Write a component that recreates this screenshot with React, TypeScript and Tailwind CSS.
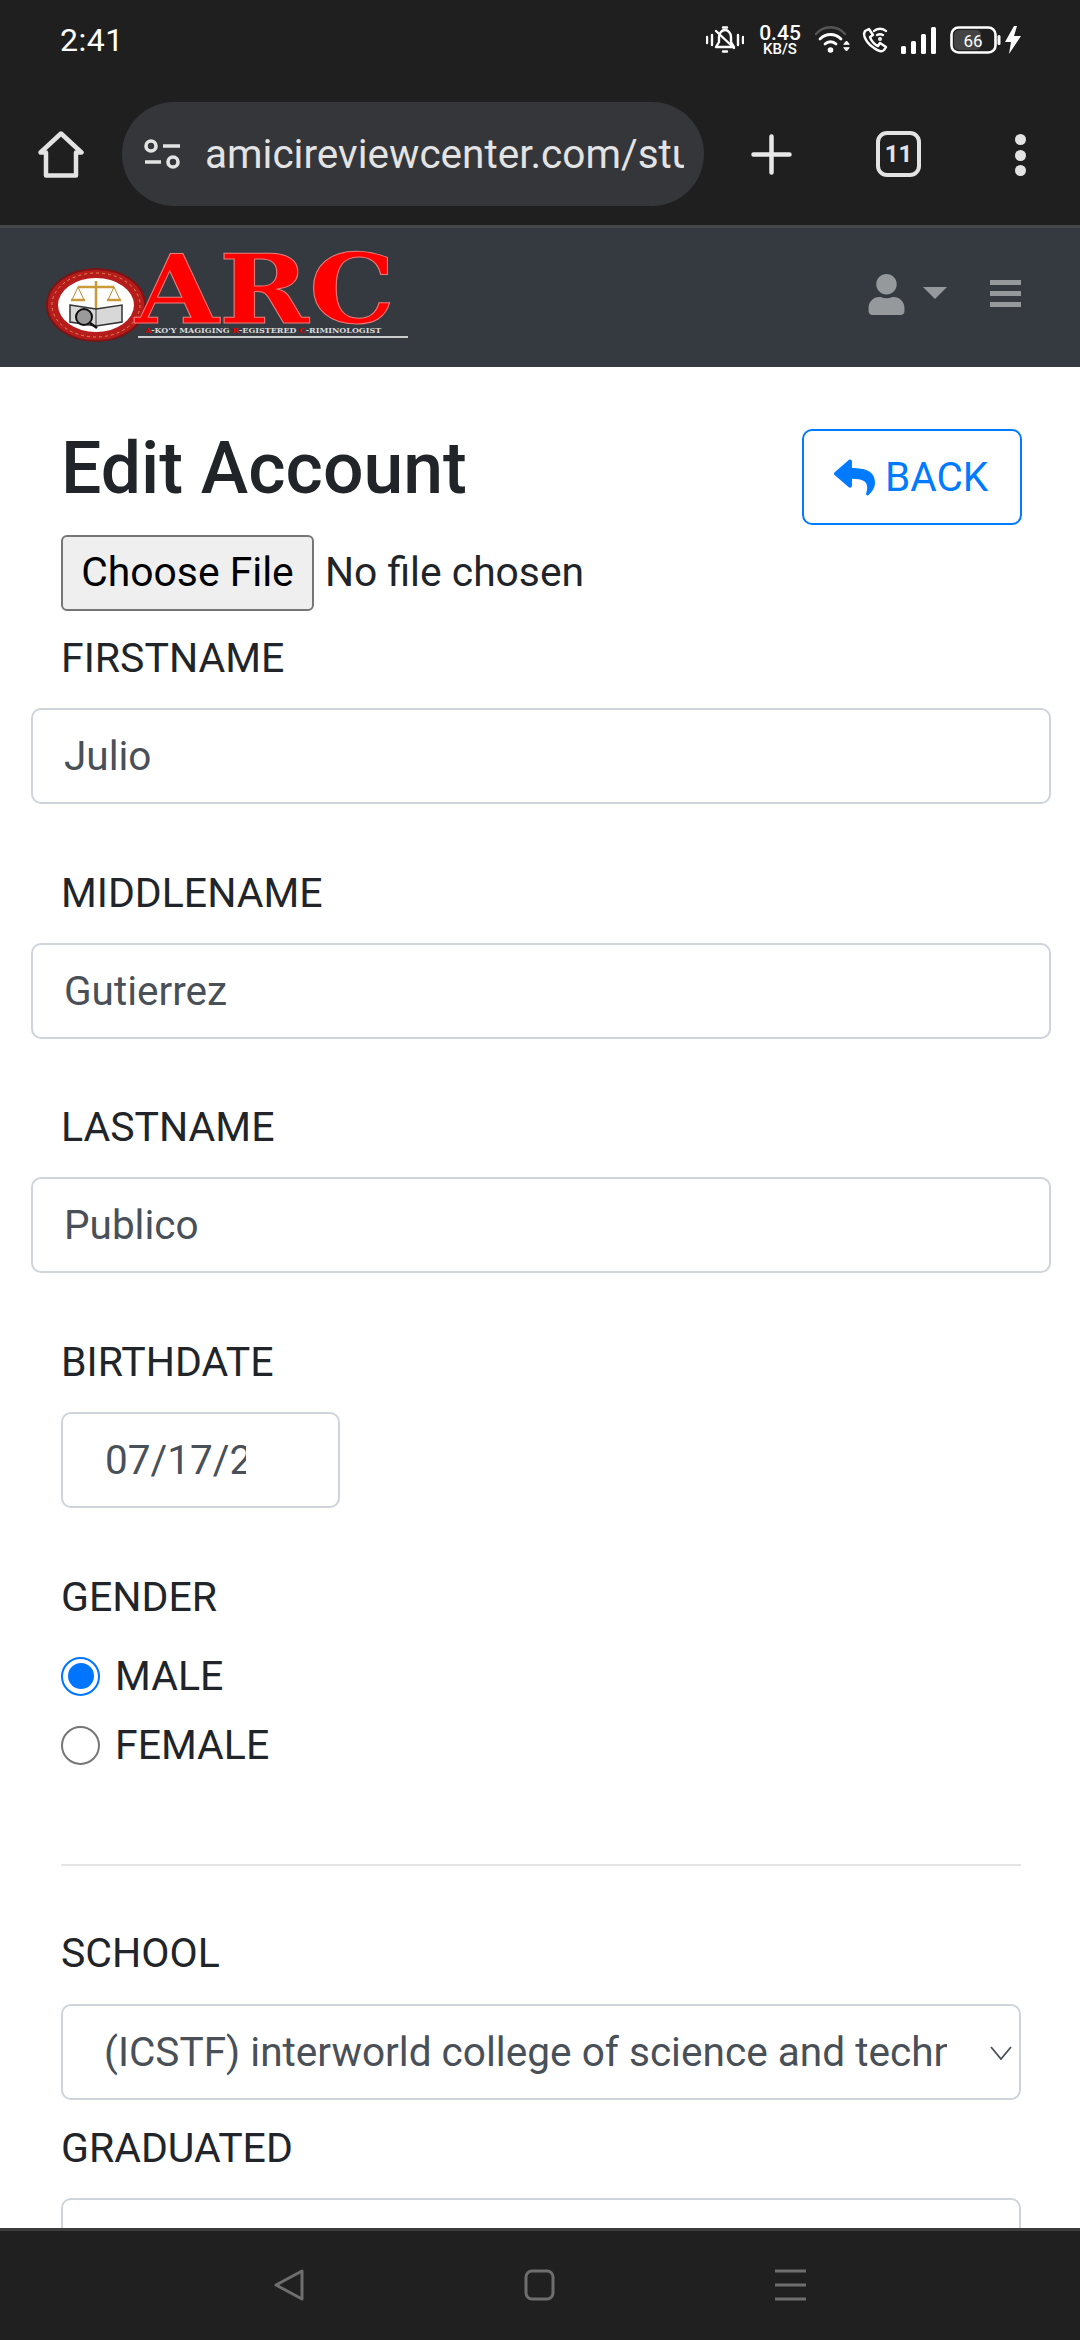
import React from 'react';
import { FaReply, FaUser } from 'react-icons/fa';

function StatusBar() {
  return (
    <div className="flex h-[80px] items-center justify-between pl-[60px] pr-[59px] text-white">
      <span className="text-[32px] leading-none tracking-[0.5px]">2:41</span>
      <div className="flex items-center">
        <svg width="38" height="28" viewBox="0 0 38 28" fill="none" stroke="white" strokeWidth="2.4" strokeLinecap="round" strokeLinejoin="round">
          <path d="M1 11v6M6 9v10M32 9v10M37 11v6" />
          <path d="M10 21h18l-3-5v-5c0-4-3-7-6-7s-6 3-6 7v5z" />
          <path d="M17 1.5h4M10 5l18 17M17 25.500h4" />
        </svg>
        <div className="ml-[15px] flex w-[42px] flex-col items-center font-medium leading-none">
          <span className="text-[21px] leading-[18px]">0.45</span>
          <span className="mt-[1px] text-[15px] leading-[13px]">KB/S</span>
        </div>
        <svg className="ml-[14px]" width="35" height="28" viewBox="0 0 35 28" fill="none" strokeLinecap="round">
          <path d="M1 8C9-1 22-1 30 8" stroke="#555" strokeWidth="2.400" />
          <path d="M5 13c6-6 15-6 21 0M10 18c3-3 8-3 11 0" stroke="white" strokeWidth="2.800" />
          <circle cx="15.500" cy="24" r="2.800" fill="white" />
          <path d="M29 18l2.500-3 2.500 3zM29 22l2.500 3 2.500-3z" fill="white" stroke="white" strokeWidth="1" />
        </svg>
        <svg className="ml-[12px]" width="26" height="28" viewBox="0 0 26 28" fill="none" stroke="white" strokeWidth="2.400" strokeLinecap="round" strokeLinejoin="round">
          <path d="M3 5l4-2 4 6-3 2c1 4 5 8 8 9l2-3 6 4-2 3c-2 2-6 1-10-2C7 19 2 13 2 8z" />
          <path d="M12 5c3-3 9-3 12 0M15 9c2-1 4-1 6 0" />
          <circle cx="18" cy="13" r="0.800" />
        </svg>
        <svg className="ml-[13px]" width="35" height="27" viewBox="0 0 35 27" fill="white">
          <rect x="0" y="19" width="5" height="8" rx="1.500" />
          <rect x="10" y="14" width="5" height="13" rx="1.500" />
          <rect x="20" y="7" width="5" height="20" rx="1.500" />
          <rect x="30" y="0" width="5" height="27" rx="1.500" />
        </svg>
        <svg className="ml-[14px]" width="51" height="28" viewBox="0 0 51 28">
          <rect x="1.500" y="1.500" width="44" height="25" rx="7" fill="none" stroke="white" strokeWidth="2.600" />
          <rect x="4" y="4" width="27" height="20" rx="5" fill="#444" />
          <rect x="47.500" y="9" width="3" height="10" rx="1.500" fill="white" />
          <text x="23" y="20.500" textAnchor="middle" fontSize="17" fill="white" fontFamily="Roboto, sans-serif">66</text>
        </svg>
        <svg className="ml-[4px]" width="16" height="28" viewBox="0 0 16 28" fill="white">
          <path d="M9 0L0 16h6l-2 12L16 10H9l3-10z" />
        </svg>
      </div>
    </div>
  );
}

function Toolbar() {
  return (
    <div className="flex h-[148px] items-start border-b-[3px] border-[#454647] pl-[38px] pt-[22px]">
      <svg className="mt-[29px]" width="46" height="47" viewBox="0 0 46 47" fill="none" stroke="#e3e3e3" strokeWidth="4.500" strokeLinejoin="round" strokeLinecap="round">
        <path d="M2.500 21.500L23 2.500l20.500 19h-5.500v23H8v-23z" />
      </svg>
      <div className="ml-[38px] flex h-[104px] w-[582px] items-center rounded-[52px] bg-[#35363a] pl-[22px] pr-[20px]">
        <svg className="shrink-0" width="37" height="30" viewBox="0 0 37 30" fill="none" stroke="#e3e3e3" strokeWidth="3.600">
          <circle cx="7" cy="7" r="5" />
          <path d="M19 7h17M1 23h16" />
          <circle cx="29" cy="23" r="5" />
        </svg>
        <div className="ml-[24px] overflow-hidden whitespace-nowrap text-[40.500px] leading-none text-[#e3e3e3]">
          amicireviewcenter.com/student/edit
        </div>
      </div>
      <svg className="ml-[47px] mt-[32px]" width="41" height="41" viewBox="0 0 41 41" stroke="#e8e8e8" strokeWidth="4.500" strokeLinecap="round">
        <path d="M20.500 2.500v36M2.500 20.500h36" />
      </svg>
      <div className="ml-[84px] mt-[29px] flex h-[46px] w-[45px] items-center justify-center rounded-[11px] border-[4.500px] border-[#e3e3e3] text-[24px] font-bold leading-none text-[#e3e3e3]">
        11
      </div>
      <div className="ml-[94px] mt-[32px] flex flex-col gap-[4.500px]">
        <span className="h-[11px] w-[11px] rounded-full bg-[#e3e3e3]" />
        <span className="h-[11px] w-[11px] rounded-full bg-[#e3e3e3]" />
        <span className="h-[11px] w-[11px] rounded-full bg-[#e3e3e3]" />
      </div>
    </div>
  );
}

function Logo() {
  return (
    <svg width="372" height="100" viewBox="0 0 372 100">
      <ellipse cx="54" cy="62" rx="49" ry="36" fill="#b71c1c" stroke="#7d1313" strokeWidth="2" />
      <ellipse cx="54" cy="62" rx="38" ry="27" fill="#ffffff" />
      <ellipse cx="54" cy="62" rx="44" ry="32" fill="none" stroke="#d98a4a" strokeWidth="1" strokeDasharray="3 3" />
      {/* scales */}
      <path d="M54 38v28M36 44h36" stroke="#c99a3c" strokeWidth="2.500" fill="none" />
      <path d="M36 44l-6 13h12zM72 44l-6 13h12z" stroke="#b9902f" strokeWidth="1" fill="none" />
      <path d="M29 57h14M65 57h14" stroke="#c99a3c" strokeWidth="2.500" />
      {/* book and magnifier */}
      <path d="M28 62l26 4 26-4v17l-26 4-26-4z" fill="#d8d8d8" stroke="#333" strokeWidth="1.500" />
      <path d="M54 66v17" stroke="#333" strokeWidth="1" />
      <circle cx="42" cy="74" r="8" fill="#9a9a9a" stroke="#111" strokeWidth="2" />
      <path d="M48 80l7 5" stroke="#111" strokeWidth="2.500" />
      <text x="93" y="80" fontFamily="'DejaVu Serif', serif" fontWeight="700" fontSize="96" fill="#ff0000" stroke="#ee7a7a" strokeWidth="1" textLength="260" lengthAdjust="spacingAndGlyphs">
        ARC
      </text>
      <text x="103" y="90" fontFamily="'DejaVu Serif', serif" fontWeight="700" fontSize="8" fill="#d9d9d9">
        <tspan fill="#e00000">A</tspan>-KO'Y MAGIGING <tspan fill="#e00000">R</tspan>-EGISTERED <tspan fill="#e00000">C</tspan>-RIMINOLOGIST
      </text>
      <path d="M96 94h270" stroke="#ffffff" strokeWidth="1.500" />
    </svg>
  );
}

function Navbar() {
  return (
    <div className="flex h-[139px] items-start bg-[#343a40] pl-[42px] pt-[15px]">
      <Logo />
      <FaUser className="ml-[452px] mt-[31px] text-[#96999c]" size={41} />
      <span className="ml-[16px] mt-[44px] h-0 w-0 border-x-[12px] border-t-[12px] border-x-transparent border-t-[#96999c]" />
      <div className="ml-[43px] mt-[37px] flex w-[31px] flex-col gap-[6px]">
        <span className="h-[5px] bg-[#96999c]" />
        <span className="h-[5px] bg-[#96999c]" />
        <span className="h-[5px] bg-[#96999c]" />
      </div>
    </div>
  );
}

interface FieldProps {
  label: string;
  value: string;
  className?: string;
}

function Field({ label, value, className }: FieldProps) {
  return (
    <div className={className}>
      <label className="ml-[30px] block h-[60px] text-[41px] leading-[60px]">{label}</label>
      <input
        readOnly
        value={value}
        className="mt-[20px] block h-[96px] w-[1020px] rounded-[10px] border-[2.500px] border-[#ced4da] bg-white pl-[31px] text-[40.500px] text-[#495057] outline-none"
      />
    </div>
  );
}

function Radio({ checked, label }: { checked?: boolean; label: string }) {
  return (
    <div className="flex h-[40px] items-center">
      {checked ? (
        <span className="flex h-[39px] w-[39px] items-center justify-center rounded-full border-[2.500px] border-[#0075ff]">
          <span className="h-[26px] w-[26px] rounded-full bg-[#0075ff]" />
        </span>
      ) : (
        <span className="h-[39px] w-[39px] rounded-full border-[2.500px] border-[#767676]" />
      )}
      <span className="ml-[15px] text-[41px] leading-none">{label}</span>
    </div>
  );
}

function BottomNav() {
  return (
    <div className="flex h-[112px] shrink-0 items-start justify-center gap-[220px] border-t-[3px] border-[#3c3c3c] bg-[#202020] pt-[38px]">
      <svg width="30" height="32" viewBox="0 0 30 32" fill="none" stroke="#6e6e6e" strokeWidth="3" strokeLinejoin="round">
        <path d="M28 2v28L2 16z" />
      </svg>
      <svg width="31" height="32" viewBox="0 0 31 32" fill="none" stroke="#6e6e6e" strokeWidth="3">
        <rect x="2" y="2" width="27" height="28" rx="6" />
      </svg>
      <svg width="31" height="32" viewBox="0 0 31 32" stroke="#6e6e6e" strokeWidth="3">
        <path d="M0 2h31M0 16h31M0 30h31" />
      </svg>
    </div>
  );
}

export default function App() {
  return (
    <div className="flex h-[2340px] w-[1080px] flex-col overflow-hidden bg-white font-['Roboto',sans-serif] text-[#212529]">
      <div className="shrink-0 bg-[#1f1f1f]">
        <StatusBar />
        <Toolbar />
      </div>
      <Navbar />
      <div className="min-h-0 flex-1 overflow-hidden px-[31px]">
        <div className="flex items-start justify-between pl-[30px] pr-[27px] pt-[62px]">
          <h1 className="mt-[-20px] text-[71.500px] font-medium leading-[120px]">Edit Account</h1>
          <button className="flex h-[96px] w-[220px] items-center rounded-[10px] border-[2.500px] border-[#007bff] pl-[30px] text-[40.500px] text-[#007bff]">
            <FaReply size={41} />
            <span className="ml-[10px]">BACK</span>
          </button>
        </div>
        <div className="ml-[30px] mt-[6px] flex items-center">
          <button className="h-[76px] w-[253px] rounded-[6px] border-[2.500px] border-[#767676] bg-[#efefef] text-[40.800px] text-black">
            Choose File
          </button>
          <span className="ml-[11px] text-[40.800px]">No file chosen</span>
        </div>
        <Field className="mt-[17px]" label="FIRSTNAME" value="Julio" />
        <Field className="mt-[59px]" label="MIDDLENAME" value="Gutierrez" />
        <Field className="mt-[58px]" label="LASTNAME" value="Publico" />
        <div className="ml-[30px] mt-[59px]">
          <label className="block h-[60px] text-[41px] leading-[60px]">BIRTHDATE</label>
          <input
            readOnly
            value="07/17/2000"
            className="mt-[20px] block h-[96px] w-[279px] rounded-[10px] border-[2.500px] border-[#ced4da] bg-white pl-[42px] pr-[92px] text-[40.500px] text-[#495057] outline-none"
          />
          <label className="mt-[59px] block h-[60px] text-[41px] leading-[60px]">GENDER</label>
          <div className="mt-[29px] flex flex-col gap-[29px]">
            <Radio checked label="MALE" />
            <Radio label="FEMALE" />
          </div>
          <hr className="mt-[99px] w-[960px] border-t-[2px] border-[#e3e5e7]" />
          <label className="mt-[57px] block h-[60px] text-[41px] leading-[60px]">SCHOOL</label>
          <div className="relative mt-[21px] w-[960px]">
            <select className="block h-[96px] w-full appearance-none rounded-[10px] border-[2.500px] border-[#ced4da] bg-white pl-[41px] pr-[72px] text-[40.600px] text-[#495057] outline-none">
              <option>(ICSTF) interworld college of science and technology foundation</option>
            </select>
            <svg className="absolute right-[9px] top-[42px]" width="22" height="14" viewBox="0 0 22 14" fill="none" stroke="#495057" strokeWidth="1.800">
              <path d="M1 1l10 12L21 1" />
            </svg>
          </div>
          <label className="mt-[18px] block h-[60px] text-[41px] leading-[60px]">GRADUATED</label>
          <div className="mt-[20px] h-[96px] w-[960px] rounded-[10px] border-[2.500px] border-[#ced4da] bg-white" />
        </div>
      </div>
      <BottomNav />
    </div>
  );
}
